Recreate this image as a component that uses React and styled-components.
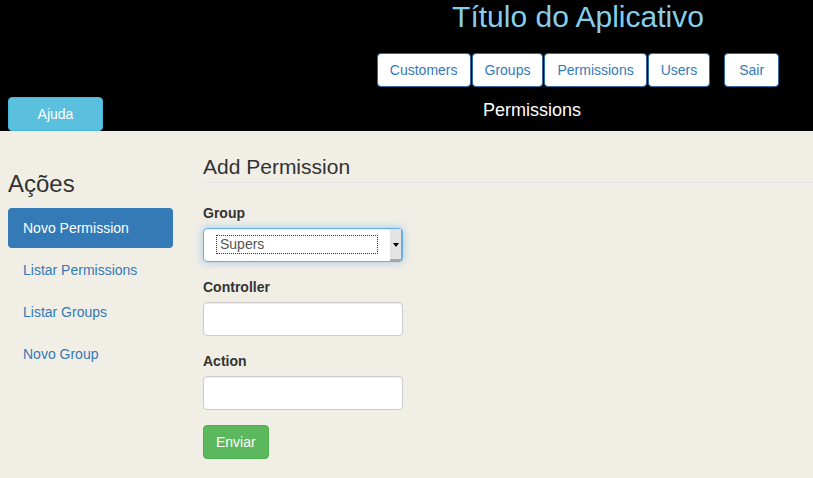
import React from "react";
import styled, { createGlobalStyle } from "styled-components";

const Global = createGlobalStyle`
  html, body { margin: 0; padding: 0; }
  body {
    background: #f1eee6;
    font-family: "Liberation Sans", Arial, Helvetica, sans-serif;
    font-size: 14px;
    line-height: 20px;
    color: #333;
  }
  * { box-sizing: border-box; }
`;

const Header = styled.header`
  background: #000;
  display: flex;
  flex-direction: column;
`;

const TopArea = styled.div`
  padding-left: 343px;
  display: flex;
  flex-direction: column;
  align-items: center;
`;

const Title = styled.h1`
  margin: 0;
  font-size: 30px;
  line-height: 33px;
  font-weight: normal;
  color: skyblue;
`;

const Nav = styled.nav`
  display: flex;
  gap: 1px;
  margin-top: 20px;
`;

const NavButton = styled.button`
  font-family: inherit;
  font-size: 14px;
  line-height: 20px;
  height: 34px;
  padding: 6px ${(p) => (p.$wide ? 14 : 12)}px;
  margin-left: ${(p) => (p.$wide ? 13 : 0)}px;
  background: #fff;
  color: #337ab7;
  border: 1px solid #2e6da4;
  border-radius: 4px;
  cursor: pointer;
`;

const BottomRow = styled.div`
  display: grid;
  grid-template-columns: 251px 1fr;
  margin-top: 10px;
  height: 34px;
`;

const AjudaCell = styled.div`
  padding-left: 8px;
`;

const AjudaButton = styled.button`
  width: 95px;
  height: 34px;
  font-family: inherit;
  font-size: 14px;
  line-height: 20px;
  color: #fff;
  background: #5bc0de;
  border: 1px solid #46b8da;
  border-radius: 4px;
  cursor: pointer;
`;

const Subtitle = styled.div`
  text-align: center;
  font-size: 18px;
  line-height: 26px;
  color: #fff;
`;

const Main = styled.main`
  display: flex;
  padding-left: 8px;
`;

const Sidebar = styled.aside`
  width: 165px;
  flex-shrink: 0;
`;

const SideTitle = styled.h3`
  margin: 40px 0 11px;
  font-size: 24px;
  line-height: 26px;
  font-weight: normal;
  color: #333;
`;

const Pills = styled.ul`
  list-style: none;
  margin: 0;
  padding: 0;
  display: flex;
  flex-direction: column;
  gap: 2px;
`;

const Pill = styled.li`
  padding: 10px 15px;
  line-height: 20px;
  border-radius: 4px;
  color: ${(p) => (p.$active ? "#fff" : "#337ab7")};
  background: ${(p) => (p.$active ? "#337ab7" : "transparent")};
  cursor: pointer;
`;

const Content = styled.section`
  flex: 1;
  margin-left: 30px;
`;

const Legend = styled.div`
  margin-top: 21px;
  margin-bottom: 20px;
  font-size: 21px;
  line-height: 30px;
  color: #333;
  border-bottom: 1px solid #e5e5e5;
`;

const FormGroup = styled.div`
  margin-bottom: 15px;
`;

const Label = styled.label`
  display: block;
  font-weight: bold;
  margin-bottom: 5px;
`;

const Input = styled.input`
  display: block;
  width: 200px;
  height: 34px;
  padding: 6px 12px;
  font-family: inherit;
  font-size: 14px;
  color: #555;
  background: #fff;
  border: 1px solid #ccc;
  border-radius: 4px;
  box-shadow: inset 0 1px 1px rgba(0, 0, 0, 0.075);
  outline: none;
`;

const SelectBox = styled.div`
  width: 200px;
  height: 34px;
  display: flex;
  align-items: stretch;
  background: #fff;
  border: 1px solid #66afe9;
  border-radius: 4px;
  box-shadow: inset 0 1px 1px rgba(0, 0, 0, 0.075),
    0 0 8px rgba(102, 175, 233, 0.6);
`;

const SelectValue = styled.div`
  margin: 6px 0 0 12px;
  width: 162px;
  height: 19px;
  border: 1px dotted #333;
  padding-left: 3px;
  font-size: 14px;
  line-height: 17px;
  color: #555;
`;

const SelectArrow = styled.div`
  margin-left: auto;
  width: 12px;
  background: #e4e4e4;
  border-right: 1px solid #999;
  border-bottom: 2px solid #a8a8a8;
  display: flex;
  align-items: center;
  justify-content: center;
  &::after {
    content: "";
    border-left: 3px solid transparent;
    border-right: 3px solid transparent;
    border-top: 4px solid #000;
    margin-top: 1px;
  }
`;

const SubmitButton = styled.button`
  height: 34px;
  padding: 6px 12px;
  font-family: inherit;
  font-size: 14px;
  line-height: 20px;
  color: #fff;
  background: #5cb85c;
  border: 1px solid #4cae4c;
  border-radius: 4px;
  cursor: pointer;
`;

const navItems = ["Customers", "Groups", "Permissions", "Users"];
const sideItems = ["Novo Permission", "Listar Permissions", "Listar Groups", "Novo Group"];

export default function App() {
  return (
    <>
      <Global />
      <Header>
        <TopArea>
          <Title>Título do Aplicativo</Title>
          <Nav>
            {navItems.map((n) => (
              <NavButton key={n}>{n}</NavButton>
            ))}
            <NavButton $wide>Sair</NavButton>
          </Nav>
        </TopArea>
        <BottomRow>
          <AjudaCell>
            <AjudaButton>Ajuda</AjudaButton>
          </AjudaCell>
          <Subtitle>Permissions</Subtitle>
        </BottomRow>
      </Header>
      <Main>
        <Sidebar>
          <SideTitle>Ações</SideTitle>
          <Pills>
            {sideItems.map((s, i) => (
              <Pill key={s} $active={i === 0}>
                {s}
              </Pill>
            ))}
          </Pills>
        </Sidebar>
        <Content>
          <Legend>Add Permission</Legend>
          <FormGroup>
            <Label>Group</Label>
            <SelectBox>
              <SelectValue>Supers</SelectValue>
              <SelectArrow />
            </SelectBox>
          </FormGroup>
          <FormGroup>
            <Label>Controller</Label>
            <Input type="text" />
          </FormGroup>
          <FormGroup>
            <Label>Action</Label>
            <Input type="text" />
          </FormGroup>
          <SubmitButton>Enviar</SubmitButton>
        </Content>
      </Main>
    </>
  );
}
